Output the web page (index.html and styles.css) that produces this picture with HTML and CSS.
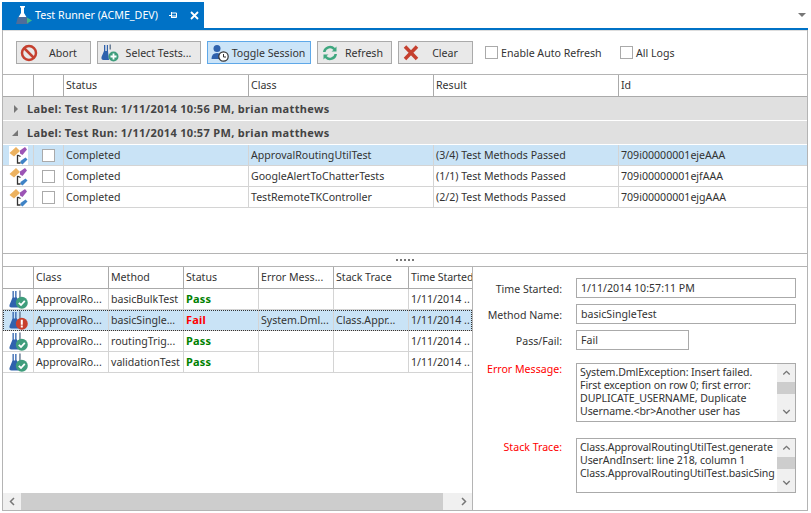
FILE: index.html
```
<!DOCTYPE html>
<html>
<head>
<meta charset="utf-8">
<title>Test Runner</title>
<link rel="stylesheet" href="styles.css">
</head>
<body>
<svg class="defs" width="0" height="0">
  <defs>
    <symbol id="flask" viewBox="0 0 19 19">
      <path d="M3.500 1v6.500L0.500 15q-.5 2.500 2 2.500h7L9 9.500 7.500 7V1H6.200v6.500H4.800V1z" fill="#2f62ad"/>
      <path d="M10.200 0.500h1.500v8h-1.500z" fill="#6d7f96"/>
    </symbol>
    <symbol id="runs" viewBox="0 0 19 19">
      <path d="M0.500 7L7 1l4 4-6 5.500z" fill="#ecb260"/>
      <path d="M11 4.500l5-3.500 2 2.500-4.500 5.500-2.500-1.500z" fill="#9c55b5"/>
      <path d="M11.500 15l5-3.500 2 2-5 5-2-1.500z" fill="#3f83c6"/>
      <path d="M8.500 9v8h3M8.500 9l3 1.500" fill="none" stroke="#333" stroke-width="1.300"/>
    </symbol>
    <symbol id="pass" viewBox="0 0 19 19">
      <use href="#flask" x="0" y="0" width="19" height="19"/>
      <circle cx="12.800" cy="12.800" r="6" fill="#3f9d7c"/>
      <path d="M9.800 12.800l2.200 2.200 3.800-4.200" fill="none" stroke="#fff" stroke-width="1.800"/>
    </symbol>
    <symbol id="fail" viewBox="0 0 19 19">
      <use href="#flask" x="0" y="0" width="19" height="19"/>
      <circle cx="12.800" cy="12.800" r="6" fill="#c8402e"/>
      <path d="M11.800 8.800h2v5h-2zM11.800 14.600h2v2h-2z" fill="#fff"/>
    </symbol>
    <symbol id="up" viewBox="0 0 9 6">
      <path d="M1 5l3.500-3.500L8 5" fill="none" stroke="#777" stroke-width="1.500"/>
    </symbol>
    <symbol id="down" viewBox="0 0 9 6">
      <path d="M1 1l3.500 3.500L8 1" fill="none" stroke="#777" stroke-width="1.500"/>
    </symbol>
  </defs>
</svg>

<div class="app">
  <div class="tabstrip">
    <div class="tab">
      <svg class="tab-icon" viewBox="0 0 17 19">
        <path d="M5 0h5v1.500H9V7l3 5H3l3-5V1.500H5z" fill="#fff"/>
        <path d="M3 11h9l1.500 7H1z" fill="#4f6d9a"/>
        <path d="M12 11.500l5 3-5 3z" fill="#43b58a"/>
      </svg>
      <span class="tab-title">Test Runner (ACME_DEV)</span>
      <svg class="tab-pin" viewBox="0 0 9 9"><path d="M0 4.500h2M2.500 2h5v4.500h-5zM2.500 1v6M2.500 5h5" stroke="#fff" fill="none"/></svg>
      <svg class="tab-close" viewBox="0 0 9 9"><path d="M1 1l7 7M8 1l-7 7" stroke="#fff" stroke-width="1.800" fill="none"/></svg>
    </div>
    <div class="tab-menu"></div>
  </div>

  <div class="panel">
    <div class="toolbar">
      <div class="btn btn-s">
        <svg class="btn-icon" viewBox="0 0 18 18"><circle cx="9" cy="9" r="7" fill="none" stroke="#c5402f" stroke-width="2.500"/><path d="M4 4l10 10" stroke="#c5402f" stroke-width="2.500"/></svg>
        <span class="btn-label">Abort</span>
      </div>
      <div class="btn btn-l">
        <svg class="btn-icon" viewBox="0 0 18 18">
          <path d="M3 1v6L.5 13q-.5 3 2 3H8L7 7V1H5.800v6H4.300V1z" fill="#2f62ad"/>
          <path d="M8.500 0.500H10v5H8.500z" fill="#6d7f96"/>
          <circle cx="12.500" cy="12.500" r="5" fill="#3f9d7c"/>
          <path d="M12.500 9.500v6M9.500 12.500h6" stroke="#fff" stroke-width="1.800"/>
        </svg>
        <span class="btn-label">Select Tests...</span>
      </div>
      <div class="btn btn-l btn-on">
        <svg class="btn-icon" viewBox="0 0 18 18">
          <circle cx="6" cy="4.500" r="3.500" fill="#2f62ad"/>
          <path d="M0.500 15q0-6 5.500-6 3 0 4 2l-2 4z" fill="#2f62ad"/>
          <circle cx="12.500" cy="12.500" r="4.700" fill="#fff" stroke="#333" stroke-width="1.200"/>
          <path d="M12.500 10v3h2.500" stroke="#333" fill="none"/>
        </svg>
        <span class="btn-label">Toggle Session</span>
      </div>
      <div class="btn btn-s">
        <svg class="btn-icon" viewBox="0 0 18 18">
          <path d="M2 8a7 7 0 0 1 12-4l1.500-1.500v5h-5L12.500 6A4.500 4.500 0 0 0 4.500 8z" fill="#3fa77f"/>
          <path d="M16 10a7 7 0 0 1-12 4l-1.500 1.500v-5h5L5.500 12a4.500 4.500 0 0 0 8-2z" fill="#3fa77f"/>
        </svg>
        <span class="btn-label">Refresh</span>
      </div>
      <div class="btn btn-s">
        <svg class="btn-icon" viewBox="0 0 18 18"><path d="M3 2.500l12 12.500M15 2.500L3 15" stroke="#c5402f" stroke-width="3.500"/></svg>
        <span class="btn-label">Clear</span>
      </div>
      <label class="check-label check-first"><span class="box"></span>Enable Auto Refresh</label>
      <label class="check-label check-second"><span class="box"></span>All Logs</label>
    </div>

    <div class="top-grid">
      <div class="row top-cols head">
        <div class="cell"></div><div class="cell"></div><div class="cell">Status</div><div class="cell">Class</div><div class="cell">Result</div><div class="cell">Id</div>
      </div>
      <div class="group"><span class="arrow arrow-closed"></span>Label: Test Run: 1/11/2014 10:56 PM, brian matthews</div>
      <div class="group"><span class="arrow arrow-open"></span>Label: Test Run: 1/11/2014 10:57 PM, brian matthews</div>
      <div class="row top-cols data selected">
        <div class="cell cell-icon icon-bg"><svg class="row-icon"><use href="#runs"/></svg></div>
        <div class="cell cell-check"><span class="box"></span></div>
        <div class="cell">Completed</div><div class="cell">ApprovalRoutingUtilTest</div><div class="cell">(3/4) Test Methods Passed</div><div class="cell">709i00000001ejeAAA</div>
      </div>
      <div class="row top-cols data">
        <div class="cell cell-icon"><svg class="row-icon"><use href="#runs"/></svg></div>
        <div class="cell cell-check"><span class="box"></span></div>
        <div class="cell">Completed</div><div class="cell">GoogleAlertToChatterTests</div><div class="cell">(1/1) Test Methods Passed</div><div class="cell">709i00000001ejfAAA</div>
      </div>
      <div class="row top-cols data">
        <div class="cell cell-icon"><svg class="row-icon"><use href="#runs"/></svg></div>
        <div class="cell cell-check"><span class="box"></span></div>
        <div class="cell">Completed</div><div class="cell">TestRemoteTKController</div><div class="cell">(2/2) Test Methods Passed</div><div class="cell">709i00000001ejgAAA</div>
      </div>
    </div>

    <div class="splitter"><span class="dots"></span></div>

    <div class="bottom">
      <div class="left">
        <div class="methods">
          <div class="row bot-cols head">
            <div class="cell"></div><div class="cell">Class</div><div class="cell">Method</div><div class="cell">Status</div><div class="cell">Error Mess...</div><div class="cell">Stack Trace</div><div class="cell cell-tight">Time Started</div>
          </div>
          <div class="row bot-cols data">
            <div class="cell cell-icon"><svg class="row-icon"><use href="#pass"/></svg></div>
            <div class="cell">ApprovalRo...</div><div class="cell">basicBulkTest</div><div class="cell pass">Pass</div><div class="cell"></div><div class="cell"></div><div class="cell">1/11/2014 ..</div>
          </div>
          <div class="row bot-cols data selected focused">
            <div class="cell cell-icon"><svg class="row-icon"><use href="#fail"/></svg></div>
            <div class="cell">ApprovalRo...</div><div class="cell">basicSingle...</div><div class="cell fail">Fail</div><div class="cell">System.Dml...</div><div class="cell">Class.Appr...</div><div class="cell">1/11/2014 ..</div>
          </div>
          <div class="row bot-cols data">
            <div class="cell cell-icon"><svg class="row-icon"><use href="#pass"/></svg></div>
            <div class="cell">ApprovalRo...</div><div class="cell">routingTrig...</div><div class="cell pass">Pass</div><div class="cell"></div><div class="cell"></div><div class="cell">1/11/2014 ..</div>
          </div>
          <div class="row bot-cols data">
            <div class="cell cell-icon"><svg class="row-icon"><use href="#pass"/></svg></div>
            <div class="cell">ApprovalRo...</div><div class="cell">validationTest</div><div class="cell pass">Pass</div><div class="cell"></div><div class="cell"></div><div class="cell">1/11/2014 ..</div>
          </div>
        </div>
        <div class="hscroll">
          <div class="hbtn hbtn-l"><svg class="chev" viewBox="0 0 6 9"><path d="M5 1L1.500 4.500 5 8" fill="none" stroke="#777" stroke-width="1.500"/></svg></div>
          <div class="hthumb"></div>
          <div class="hbtn hbtn-r"><svg class="chev" viewBox="0 0 6 9"><path d="M1 1l3.500 3.500L1 8" fill="none" stroke="#777" stroke-width="1.500"/></svg></div>
        </div>
      </div>

      <div class="form">
        <div class="field">
          <div class="flabel">Time Started:</div>
          <div class="input input-wide">1/11/2014 10:57:11 PM</div>
        </div>
        <div class="field">
          <div class="flabel">Method Name:</div>
          <div class="input input-wide">basicSingleTest</div>
        </div>
        <div class="field">
          <div class="flabel">Pass/Fail:</div>
          <div class="input input-narrow">Fail</div>
        </div>
        <div class="field field-memo">
          <div class="flabel red">Error Message:</div>
          <div class="memo memo-a">
            <div class="memo-text">System.DmlException: Insert failed.<br>First exception on row 0; first error:<br>DUPLICATE_USERNAME, Duplicate<br>Username.&lt;br&gt;Another user has</div>
            <div class="vscroll">
              <svg class="vchev"><use href="#up"/></svg>
              <div class="vthumb"></div>
              <svg class="vchev"><use href="#down"/></svg>
            </div>
          </div>
        </div>
        <div class="field field-memo field-stack">
          <div class="flabel red">Stack Trace:</div>
          <div class="memo memo-b">
            <div class="memo-text">Class.ApprovalRoutingUtilTest.generate<br>UserAndInsert: line 218, column 1<br>Class.ApprovalRoutingUtilTest.basicSing</div>
            <div class="vscroll">
              <svg class="vchev"><use href="#up"/></svg>
              <div class="vthumb"></div>
              <svg class="vchev"><use href="#down"/></svg>
            </div>
          </div>
        </div>
      </div>
    </div>
  </div>
</div>
</body>
</html>
```

FILE: styles.css
```
* { box-sizing: border-box; }
html, body { margin: 0; padding: 0; background: #fff; }
body {
  font-family: "Noto Sans", "Liberation Sans", sans-serif;
  font-size: 10.6px;
  color: #333;
  overflow: hidden;
}
.defs { display: block; height: 0; }
.app { width: 811px; height: 513px; display: flex; flex-direction: column; padding: 2px 3px 2px 2px; }

.tabstrip { height: 28px; flex: none; display: flex; justify-content: space-between; border-bottom: 2px solid #0072c6; }
.tab { width: 202px; height: 26px; background: #0072c6; color: #fff; display: flex; align-items: center; padding-left: 13px; font-size: 10.7px; }
.tab-icon { width: 17px; height: 19px; flex: none; }
.tab-title { margin-left: 1px; width: 136px; padding-left: 2px; white-space: nowrap; }
.tab-pin { width: 9px; height: 9px; flex: none; }
.tab-close { width: 9px; height: 9px; margin-left: 12px; flex: none; }
.tab-menu { width: 0; height: 0; margin: 11px 2px 0 0; border-left: 4px solid transparent; border-right: 4px solid transparent; border-top: 4px solid #777; }

.panel { height: 481px; flex: none; border: 1px solid #b4b4b4; border-top: 0; display: flex; flex-direction: column; }
.toolbar { height: 44px; flex: none; padding: 10px 0 0 13px; display: flex; align-items: flex-start; gap: 6px; border-top: 1px solid #ddd; }
.btn { height: 23px; border: 1px solid #aaa; background: #e9e9e9; display: flex; align-items: center; padding-left: 3px; flex: none; }
.btn-s { width: 75px; }
.btn-l { width: 104px; }
.btn-on { background: #cbe4f8; border-color: #5fa8e8; }
.btn-icon { width: 18px; height: 18px; flex: none; }
.btn-label { flex: 1; text-align: center; white-space: nowrap; padding-right: 2px; }
.box { display: inline-block; width: 13px; height: 13px; border: 1px solid #aaa; background: #fff; flex: none; }
.check-label { display: flex; align-items: center; gap: 3px; height: 23px; white-space: nowrap; }
.check-first { margin-left: 6px; width: 129px; }

.top-grid { height: 179px; flex: none; border-top: 1px solid #b4b4b4; }
.row { display: grid; }
.top-cols { grid-template-columns: 31px 30px 185px 185px 185px 1fr; }
.bot-cols { grid-template-columns: 31px 75px 75px 75px 75px 75px 63px; }
.cell { border-right: 1px solid #d4d4d4; padding-left: 2px; white-space: nowrap; overflow: hidden; display: flex; align-items: center; }
.cell:last-child { border-right: 0; }
.head { border-bottom: 1px solid #aaa; height: 22px; }
.head .cell { border-right-color: #aaa; padding-bottom: 2px; }
.head .cell-tight { letter-spacing: -0.1px; }
.data { height: 21px; border-bottom: 1px solid #d4d4d4; }
.selected { background: #c9e3f6; }
.group { height: 24px; background: #e0e0e0; border-bottom: 1px solid #fff; font-size: 11px; font-weight: 700; letter-spacing: 0.33px; display: flex; align-items: center; padding-left: 9px; color: #444; }
.arrow { width: 0; height: 0; margin-right: 9px; display: inline-block; flex: none; }
.arrow-closed { margin-left: 2px; border-top: 4px solid transparent; border-bottom: 4px solid transparent; border-left: 4px solid #777; }
.arrow-open { border-bottom: 6px solid #777; border-left: 6px solid transparent; }
.cell-icon { padding-left: 6px; }
.icon-bg .row-icon { background: #fff; }
.cell-check { justify-content: center; padding-left: 0; }
.row-icon { width: 19px; height: 19px; flex: none; display: block; }

.splitter { height: 14px; flex: none; border-top: 1px solid #b4b4b4; border-bottom: 1px solid #b4b4b4; display: flex; justify-content: center; padding-top: 5px; }
.dots { width: 18px; height: 2px; background: repeating-linear-gradient(90deg, #777 0 2px, transparent 2px 4px); }

.bottom { flex: 1; display: flex; min-height: 0; }
.left { width: 470px; flex: none; display: flex; flex-direction: column; border-right: 1px solid #b4b4b4; }
.methods { flex: 1; overflow: hidden; }
.focused { outline: 1px dotted #333; outline-offset: -1px; }
.pass { color: #008000; font-weight: 700; font-size: 11px; letter-spacing: 0.2px; padding-bottom: 2px; }
.fail { color: #f00; font-weight: 700; font-size: 11px; letter-spacing: 0.2px; padding-bottom: 2px; }
.hscroll { height: 17px; flex: none; display: flex; background: #f0f0f0; }
.hbtn { display: flex; align-items: center; justify-content: center; }
.hbtn-l { width: 18px; }
.hbtn-r { width: 29px; padding-left: 12px; }
.hthumb { flex: 1; background: #cdcdcd; }
.chev { width: 6px; height: 9px; }

.form { flex: 1; padding: 11px 0 0 0; display: flex; flex-direction: column; }
.field { display: flex; align-items: center; gap: 14px; height: 20px; margin-bottom: 6px; }
.flabel { width: 89px; text-align: right; white-space: nowrap; flex: none; padding-top: 2px; }
.red { color: #f00; }
.input { height: 20px; border: 1px solid #aaa; padding-left: 4px; display: flex; align-items: center; white-space: nowrap; }
.input-wide { width: 220px; }
.input-narrow { width: 113px; }
.field-memo { height: auto; align-items: flex-start; margin-top: 7px; margin-bottom: 0; }
.field-memo .flabel { line-height: 13px; padding-top: 0; }
.field-stack { margin-top: 16px; }
.field-stack .flabel { padding-top: 3px; }
.memo { width: 220px; border: 1px solid #aaa; display: flex; justify-content: space-between; }
.memo-a { height: 59px; }
.memo-b { height: 55px; }
.memo-text { padding: 2px 0 0 3px; line-height: 13px; letter-spacing: -0.1px; white-space: nowrap; overflow: hidden; width: 200px; }
.vscroll { width: 18px; flex: none; background: #f0f0f0; display: flex; flex-direction: column; align-items: center; justify-content: space-between; }
.vchev { width: 9px; height: 6px; margin: 6px 0; }
.vthumb { width: 18px; height: 14px; background: #cdcdcd; margin-bottom: 9px; }
.memo-b .vthumb { margin-bottom: 5px; }
```
